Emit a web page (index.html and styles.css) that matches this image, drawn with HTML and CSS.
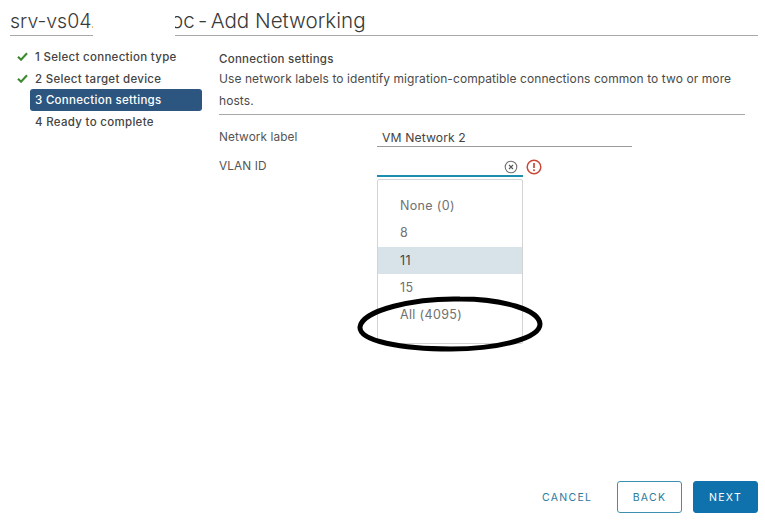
FILE: index.html
```html
<!DOCTYPE html>
<html lang="en">
<head>
<meta charset="utf-8">
<title>Add Networking</title>
<link rel="stylesheet" href="styles.css">
</head>
<body>
<div class="dialog">
  <header class="title-row">
    <h1 class="title title-left">srv-vs04.</h1>
    <div class="redaction"></div>
    <h1 class="title title-right"><span class="clipped">oc - </span>Add Networking</h1>
  </header>
  <div class="main">
    <nav class="steps">
      <div class="step"><svg class="check" viewBox="0 0 12 10"><path d="M1 5.2 4.4 8.5 11 1.5" fill="none" stroke="#3c8a2e" stroke-width="2.4"/></svg><span>1 Select connection type</span></div>
      <div class="step"><svg class="check" viewBox="0 0 12 10"><path d="M1 5.2 4.4 8.5 11 1.5" fill="none" stroke="#3c8a2e" stroke-width="2.4"/></svg><span>2 Select target device</span></div>
      <div class="step active"><span>3 Connection settings</span></div>
      <div class="step"><span>4 Ready to complete</span></div>
    </nav>
    <section class="content">
      <h2 class="section-title">Connection settings</h2>
      <p class="description">Use network labels to identify migration-compatible connections common to two or more hosts.</p>
      <div class="form-row row-label">
        <span class="label">Network label</span>
        <div class="input input-text">VM Network 2</div>
      </div>
      <div class="form-row row-vlan">
        <span class="label">VLAN ID</span>
        <div class="vlan-wrap">
          <div class="vlan-line">
            <div class="input input-vlan">
              <svg class="clear" viewBox="0 0 14 14"><circle cx="7" cy="7" r="5.8" fill="none" stroke="#6f6f6f" stroke-width="1.1"/><path d="M5 5 9 9M9 5 5 9" stroke="#555" stroke-width="1.1"/></svg>
            </div>
            <svg class="error" viewBox="0 0 16 16"><circle cx="8" cy="8" r="6.8" fill="none" stroke="#c9483c" stroke-width="1.5"/><path d="M8 4v5" stroke="#c9483c" stroke-width="1.7"/><circle cx="8" cy="11.3" r="1" fill="#c9483c"/></svg>
          </div>
          <ul class="dropdown">
            <li>None (0)</li>
            <li>8</li>
            <li class="selected">11</li>
            <li>15</li>
            <li>All (4095)</li>
          </ul>
          <svg class="annotation" viewBox="0 0 190 60"><path d="M5 33C7 16 60 4 105 5c44 0 79 11 80 25 0 14-40 25-89 25C46 55 4 47 5 33Z" fill="none" stroke="#000" stroke-width="5"/></svg>
        </div>
      </div>
    </section>
  </div>
  <footer class="footer">
    <button class="btn btn-link">CANCEL</button>
    <button class="btn btn-outline">BACK</button>
    <button class="btn btn-primary">NEXT</button>
  </footer>
</div>
</body>
</html>
```
FILE: styles.css
```css
* { box-sizing: border-box; }
html, body { margin: 0; height: 100%; background: #fff; }
body { font-family: "Inter", "Liberation Sans", sans-serif; color: #4a4a4a; font-size: 11px; }
.dialog { height: 521px; display: flex; flex-direction: column; padding: 0 7px 8px 10px; overflow: hidden; }

.title-row { display: flex; height: 36px; flex: none; }
.title { margin: 0; font-size: 19.5px; font-weight: 300; line-height: 42px; color: #3a3a3a; border-bottom: 1px solid #a8a8a8; white-space: pre; }
.title-left { width: 83px; }
.redaction { width: 82px; background: #fff; position: relative; z-index: 1; }
.title-right { flex: 1; font-size: 20.6px; }
.clipped { margin-left: -4px; word-spacing: -2.5px; }

.main { display: flex; flex: 1; min-height: 0; padding-top: 10px; }
.steps { width: 192px; padding-left: 20px; flex: none; display: flex; flex-direction: column; }
.step { height: 21.7px; display: flex; align-items: center; padding-left: 5px; position: relative; font-size: 11.5px; font-weight: 500; color: #444; letter-spacing: .3px; white-space: nowrap; }
.step.active { background: #2c5680; color: #fff; border-radius: 3px; letter-spacing: .3px; }
.check { position: absolute; left: -13px; top: 6px; width: 11px; height: 9px; }

.content { margin-left: 17px; width: 526px; }
.section-title { margin: 5px 0 0; font-size: 11.5px; font-weight: 500; letter-spacing: .25px; line-height: 16px; color: #444; }
.description { margin: 1px 0 0; font-size: 12px; letter-spacing: .08px; line-height: 21.5px; padding-bottom: 3px; border-bottom: 1px solid #a8a8a8; }

.form-row { display: flex; }
.label { width: 158px; flex: none; font-size: 11.8px; letter-spacing: .1px; color: #555; }
.row-label { margin-top: 15px; line-height: 15px; }
.input-text { width: 255px; height: 17px; padding-left: 5px; border-bottom: 1px solid #9a9a9a; font-size: 12.2px; letter-spacing: .1px; color: #444; }
.row-vlan { margin-top: 12px; line-height: 15px; }
.vlan-wrap { position: relative; }
.vlan-line { display: flex; align-items: flex-start; }
.input-vlan { width: 146px; height: 18px; border-bottom: 2px solid #1d8db0; display: flex; justify-content: flex-end; padding: 1px 5px 0 0; }
.clear { width: 14px; height: 14px; }
.error { width: 16px; height: 16px; margin: 0 0 0 3px; }

.dropdown { list-style: none; margin: 2px 0 0; padding: 12px 0; width: 146px; height: 165px; border: 1px solid #d4d4d4; border-radius: 2px; background: #fff; font-size: 12.5px; letter-spacing: .35px; color: #707070; }
.dropdown li { height: 27.3px; line-height: 27px; padding-left: 22px; }
.dropdown .selected { background: #d8e3e9; color: #444; }
.annotation { position: absolute; left: -24px; top: 135px; width: 194px; height: 60px; }

.footer { display: flex; justify-content: flex-end; align-items: center; flex: none; height: 32px; }
.btn { font: inherit; font-size: 10.5px; letter-spacing: 1.3px; height: 32px; border-radius: 3px; background: none; border: 1px solid transparent; padding: 0; }
.btn-link { width: 52px; color: #2d7a9c; margin-right: 24px; }
.btn-outline { width: 65px; color: #2d7a9c; border-color: #3f8fb0; margin-right: 11px; }
.btn-primary { width: 65px; color: #fff; background: #0f72ac; border-color: #0f72ac; }
```
